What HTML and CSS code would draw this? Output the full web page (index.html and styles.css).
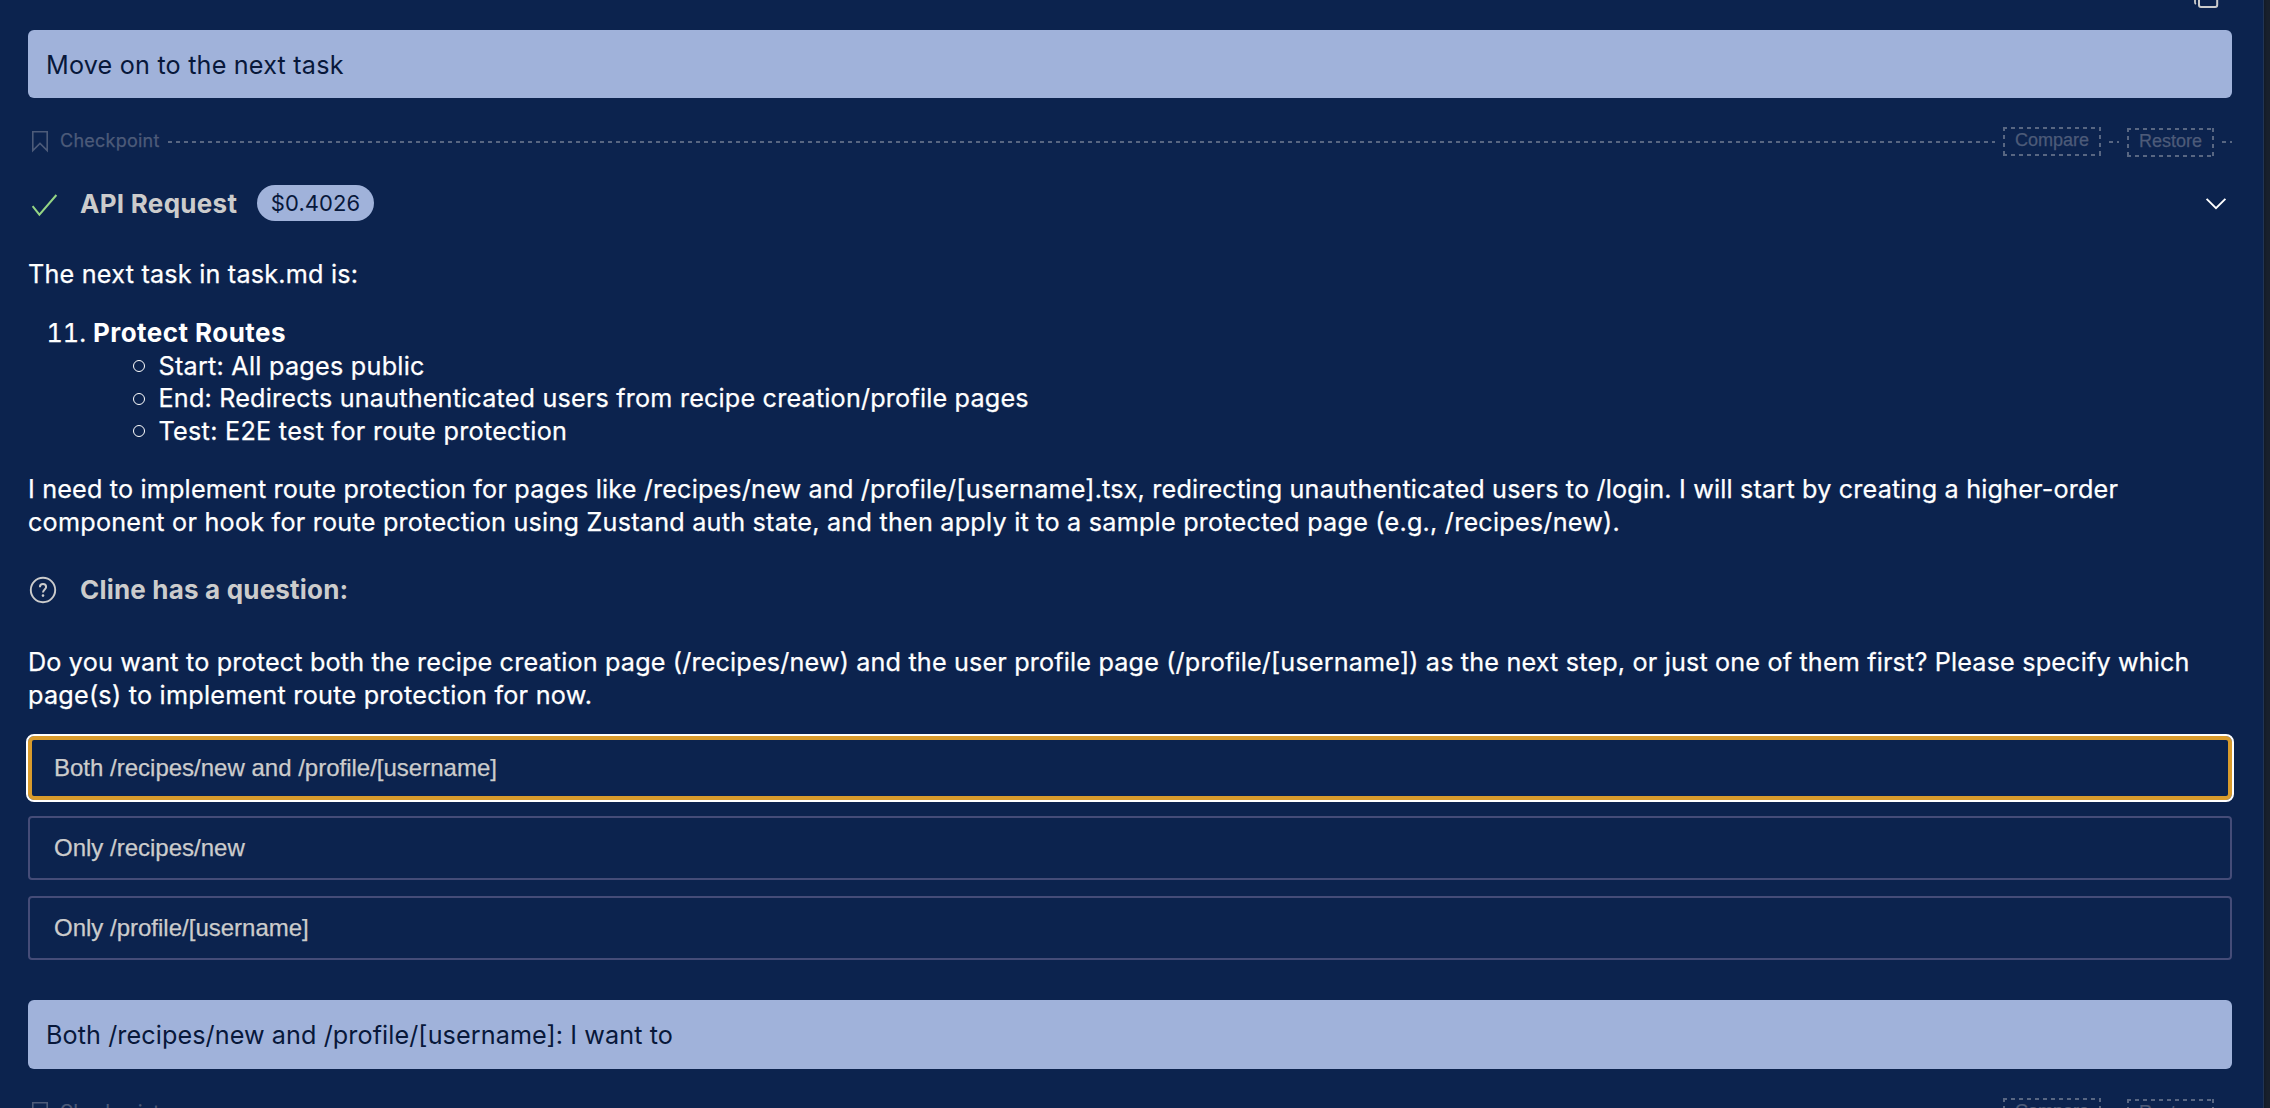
FILE: index.html
```html
<!DOCTYPE html>
<html lang="en">
<head>
<meta charset="utf-8">
<title>Cline</title>
<link rel="stylesheet" href="styles.css">
</head>
<body>
<div class="panel">
  <main class="chat">
    <div class="toolbar">
      <svg class="copy-icon" width="28" height="10" viewBox="0 0 28 10" fill="none" stroke="#cccccc" stroke-width="2"><path d="M7 -4V5Q7 7 9 7H23.2Q25.2 7 25.2 5V-4"/><path d="M3 -4V2.2Q3 3.6 4 4" stroke-width="1.8"/></svg>
    </div>
    <div class="user-message first"><span class="ls-move">Move on to the next task</span></div>

    <div class="checkpoint">
      <svg class="bookmark" width="18" height="23" viewBox="0 0 18 23" fill="none" stroke="currentColor" stroke-width="1.6"><path d="M1.8 1.8H16.2V20.6L9 13.4L1.8 20.6Z"/></svg>
      <span class="checkpoint-label">Checkpoint</span>
      <i class="dashes grow"></i>
      <button class="chip compare">Compare</button>
      <i class="dashes short"></i>
      <button class="chip restore">Restore</button>
      <i class="dashes short"></i>
    </div>

    <div class="api-row">
      <svg class="check" width="28" height="26" viewBox="0 0 28 26" fill="none" stroke="#95d584" stroke-width="2"><path d="M2.6 14.2L9.4 22.6L26.4 3"/></svg>
      <span class="title">API Request</span>
      <span class="cost">$0.4026</span>
      <svg class="chevron" width="22" height="14" viewBox="0 0 22 14" fill="none" stroke="#ffffff" stroke-width="1.9"><path d="M1.6 1.8L11 11.2L20.4 1.8"/></svg>
    </div>

    <p class="intro"><span class="line ls-intro">The next task in task.md is:</span></p>
    <ol class="tasks" start="11">
      <li><span class="number">11.</span><strong>Protect Routes</strong>
        <ul>
          <li class="ls-start">Start: All pages public</li>
          <li class="ls-end">End: Redirects unauthenticated users from recipe creation/profile pages</li>
          <li class="ls-test">Test: E2E test for route protection</li>
        </ul>
      </li>
    </ol>
    <p class="plan">
      <span class="line ls-need">I need to implement route protection for pages like /recipes/new and /profile/[username].tsx, redirecting unauthenticated users to /login. I will start by creating a higher-order</span>
      <span class="line ls-component">component or hook for route protection using Zustand auth state, and then apply it to a sample protected page (e.g., /recipes/new).</span>
    </p>

    <div class="question-head">
      <svg width="30" height="30" viewBox="0 0 30 30" fill="none" stroke="#cccccc"><circle cx="15" cy="15" r="12.2" stroke-width="1.9"/><path d="M11.9 12.3C11.9 10.2 13.1 9.1 15 9.1C16.9 9.1 18.1 10.2 18.1 11.9C18.1 14.4 15 14.5 15 17.6" stroke-width="2"/><circle cx="15" cy="20.6" r="1.3" fill="#cccccc" stroke="none"/></svg>
      <span class="title">Cline has a question:</span>
    </div>
    <p class="question">
      <span class="line ls-do">Do you want to protect both the recipe creation page (/recipes/new) and the user profile page (/profile/[username]) as the next step, or just one of them first? Please specify which</span>
      <span class="line ls-page">page(s) to implement route protection for now.</span>
    </p>

    <div class="options">
      <button class="option focused">Both /recipes/new and /profile/[username]</button>
      <button class="option">Only /recipes/new</button>
      <button class="option">Only /profile/[username]</button>
    </div>

    <div class="user-message second"><span class="ls-both">Both /recipes/new and /profile/[username]: I want to</span></div>

    <div class="checkpoint">
      <svg class="bookmark" width="18" height="23" viewBox="0 0 18 23" fill="none" stroke="currentColor" stroke-width="1.6"><path d="M1.8 1.8H16.2V20.6L9 13.4L1.8 20.6Z"/></svg>
      <span class="checkpoint-label">Checkpoint</span>
      <i class="dashes grow"></i>
      <button class="chip compare">Compare</button>
      <i class="dashes short"></i>
      <button class="chip restore">Restore</button>
      <i class="dashes short"></i>
    </div>
  </main>
  <div class="gutter"></div>
</div>
</body>
</html>
```
FILE: styles.css
```css
* { box-sizing: border-box; }

body {
  margin: 0;
  height: 1108px;
  overflow: hidden;
  background: #0c234e;
  color: #ffffff;
  font: 25.2px/32.5px Inter, "Liberation Sans", sans-serif;
  -webkit-text-stroke: .25px currentColor;
}

p, ol, ul { margin: 0; padding: 0; list-style: none; }
svg { display: block; flex: none; }
button { font-family: "Liberation Sans", Arial, sans-serif; background: none; margin: 0; -webkit-text-stroke: .25px currentColor; }

.panel { display: flex; height: 1108px; overflow: hidden; }
.chat { width: 2263px; flex: none; padding: 0 31px 0 28px; }
.gutter { flex: 1; background: linear-gradient(90deg, #121a26, #18202c 3px); border-left: 1px solid #213453; }

.toolbar { height: 30px; display: flex; justify-content: flex-end; padding-right: 12px; }

.user-message { background: #a0b2da; color: #08183a; border-radius: 6px; padding-left: 18px; white-space: nowrap; -webkit-text-stroke: 0; }
.user-message.first { height: 68px; line-height: 70px; }
.user-message.second { height: 69px; line-height: 70px; margin-top: 40px; }

.checkpoint { display: flex; align-items: flex-start; height: 31px; margin-top: 29px; color: #4d5b79; }
.bookmark { margin: 3px 0 0 3px; }
.checkpoint-label { width: 108px; margin-left: 11px; font-size: 18px; line-height: 27px; letter-spacing: .25px; }
.dashes { height: 2px; margin-top: 14px; background: repeating-linear-gradient(90deg, #586682 0 4px, transparent 4px 8px); }
.dashes.grow { flex: 1; }
.dashes.short { width: 10px; }
.chip {
  height: 29px; padding: 0; border: 0; margin: 0 8px;
  color: #4d5b79; font-size: 18px; line-height: 27px; text-align: center;
  display: flex; justify-content: center; align-items: flex-start;
  background:
    repeating-linear-gradient(90deg, #586682 0 4px, transparent 4px 8px) 0 0 / 100% 2px no-repeat,
    repeating-linear-gradient(90deg, #586682 0 4px, transparent 4px 8px) 0 100% / 100% 2px no-repeat,
    repeating-linear-gradient(180deg, #586682 0 4px, transparent 4px 8px) 0 0 / 2px 100% no-repeat,
    repeating-linear-gradient(180deg, #586682 0 4px, transparent 4px 8px) 100% 0 / 2px 100% no-repeat;
}
.compare { width: 98px; }
.restore { width: 87px; margin-top: 1px; }

.api-row { display: flex; align-items: center; height: 36px; margin-top: 27px; }
.check { margin: 4px 0 0 2px; }
.title { font-size: 26px; font-weight: 700; color: #cccccc; letter-spacing: .19px; line-height: 36px; white-space: nowrap; -webkit-text-stroke: 0; }
.api-row .title { width: 177px; margin-left: 22px; padding-top: 2px; letter-spacing: .28px; }
.cost { width: 117px; height: 36px; border-radius: 18px; background: #a0b2da; color: #08183a; font-size: 22px; line-height: 37px; text-align: center; -webkit-text-stroke: 0; letter-spacing: .05px; }
.chevron { margin: 2px 5px 0 auto; }

.line { display: block; white-space: nowrap; }
.intro { margin-top: 36.5px; }
.tasks { margin-top: 27px; }
.number { display: inline-block; width: 65px; padding-left: 18.5px; font-variant-numeric: tabular-nums; }
strong { font-size: 26px; line-height: 32px; letter-spacing: .45px; -webkit-text-stroke: 0; }
.tasks ul { padding-left: 128.5px; }
.tasks ul li { display: flex; align-items: center; white-space: nowrap; }
.tasks ul li::before { content: ""; width: 10px; height: 10px; border: 1.3px solid #ffffff; border-radius: 50%; margin: 1px 14px 0 -24px; }
.plan { margin-top: 26px; }

.question-head { display: flex; align-items: center; height: 36px; margin-top: 34px; }
.question-head .title { margin-left: 22px; }
.question { margin-top: 38px; }

.options { display: flex; flex-direction: column; gap: 16px; margin-top: 25px; }
.option { height: 64px; border: 2px solid #454c78; border-radius: 4px; padding: 0 0 0 24px; text-align: left; color: #cccccc; font-size: 24px; line-height: 58px; letter-spacing: 0; }
.option.focused { border: 4px solid #d99b2c; padding-left: 22px; line-height: 54px; border-radius: 6px; outline: 2px solid #ffffff; }

.ls-move { letter-spacing: .19px; }
.ls-intro { letter-spacing: .21px; }
.ls-need { letter-spacing: .172px; }
.ls-component { letter-spacing: .225px; }
.ls-do { letter-spacing: .162px; }
.ls-page { letter-spacing: .245px; }
.ls-both { letter-spacing: .08px; }
.ls-start { letter-spacing: .25px; }
.ls-end { letter-spacing: .187px; }
.ls-test { letter-spacing: .28px; }
```
